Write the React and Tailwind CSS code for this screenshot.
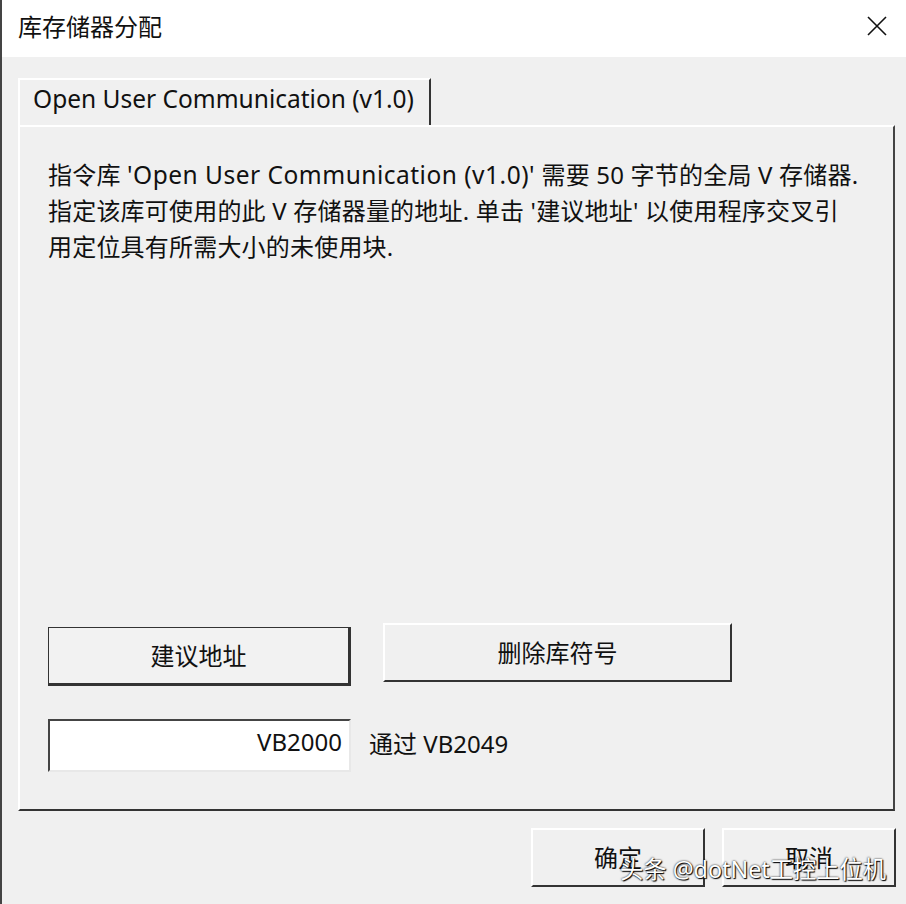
import React from "react";

const cjk = "font-['Noto_Sans','Noto_Sans_CJK_SC',sans-serif]";

export default function App() {
  return (
    <div className={`relative w-[906px] h-[904px] bg-[#f0f0f0] text-[#111] ${cjk} border-l-2 border-[#444] flex flex-col overflow-hidden`}>
      {/* Title bar */}
      <div className="h-[57px] bg-white flex items-center justify-between pl-[16px] pr-[16px] shrink-0">
        <span className="text-[24px] leading-none -mt-[3px]">库存储器分配</span>
        <svg width="22" height="22" viewBox="0 0 22 22" className="mr-[2px] -mt-[5px]">
          <path d="M2 2 L20 20 M20 2 L2 20" stroke="#111" strokeWidth="1.6" fill="none" />
        </svg>
      </div>

      {/* Body */}
      <div className="flex flex-col pl-[16px] pr-[11px] pt-[21px]">
        {/* Tab row */}
        <div className="flex">
          <div className="w-[413px] h-[47px] border-t-2 border-l-2 border-white border-r-2 border-r-[#333] flex items-center pl-[13px] pb-[6px]">
            <span className="text-[24.5px] leading-none">Open User Communication (v1.0)</span>
          </div>
        </div>
        {/* Panel */}
        <div className="h-[686px] border-t-2 border-l-2 border-white border-r-2 border-r-[#444] border-b-2 border-b-[#333] flex flex-col pl-[28px] pt-[30px] pb-[37px]">
          <p className="text-[24px] leading-[36px] tracking-[0.2px]">
            指令库 <span className="text-[24.5px] tracking-[0.5px]">'Open User Communication (v1.0)'</span> 需要 50 字节的全局 V 存储器.
            <br />
            指定该库可使用的此 V 存储器量的地址. 单击 '建议地址' 以使用程序交叉引
            <br />
            用定位具有所需大小的未使用块.
          </p>
          <div className="mt-auto flex flex-col">
            <div className="flex items-start gap-[32px]">
              <div className="mt-[4px] w-[303px] h-[59px] border border-[#333] border-b-[3px] border-r-[3px] bg-[#f2f2f2] flex items-center justify-center">
                <span className="text-[24px] leading-none">建议地址</span>
              </div>
              <div className="w-[349px] h-[59px] border-t-2 border-l-2 border-white border-b-2 border-r-2 border-b-[#333] border-r-[#333] flex items-center justify-center">
                <span className="text-[24px] leading-none">删除库符号</span>
              </div>
            </div>
            <div className="flex items-center mt-[33px]">
              <div className="w-[303px] h-[53px] bg-white border-t-2 border-l-2 border-[#444] border-b-2 border-r-2 border-b-[#e8e8e8] border-r-[#e8e8e8] flex items-center justify-end pr-[7px] pb-[8px]">
                <span className="text-[24px] leading-none">VB2000</span>
              </div>
              <span className="ml-[18px] text-[24px] leading-none -mt-[3px]">通过 VB2049</span>
            </div>
          </div>
        </div>
        {/* Bottom buttons */}
        <div className="flex justify-end gap-[17px] mt-[17px] -mr-[1px]">
          <div className="w-[174px] h-[59px] border-t-2 border-l-2 border-white border-b-2 border-r-2 border-b-[#333] border-r-[#333] flex items-center justify-center">
            <span className="text-[24px] leading-none">确定</span>
          </div>
          <div className="w-[174px] h-[59px] border-t-2 border-l-2 border-white border-b-2 border-r-2 border-b-[#333] border-r-[#333] flex items-center justify-center">
            <span className="text-[24px] leading-none">取消</span>
          </div>
        </div>
      </div>

      {/* Watermark */}
      <div className="absolute left-[618px] top-[858px] text-[23.3px] leading-none text-white [text-shadow:0_0_2px_#000,1px_1px_1px_#000]">
        头条 @dotNet工控上位机
      </div>
    </div>
  );
}
